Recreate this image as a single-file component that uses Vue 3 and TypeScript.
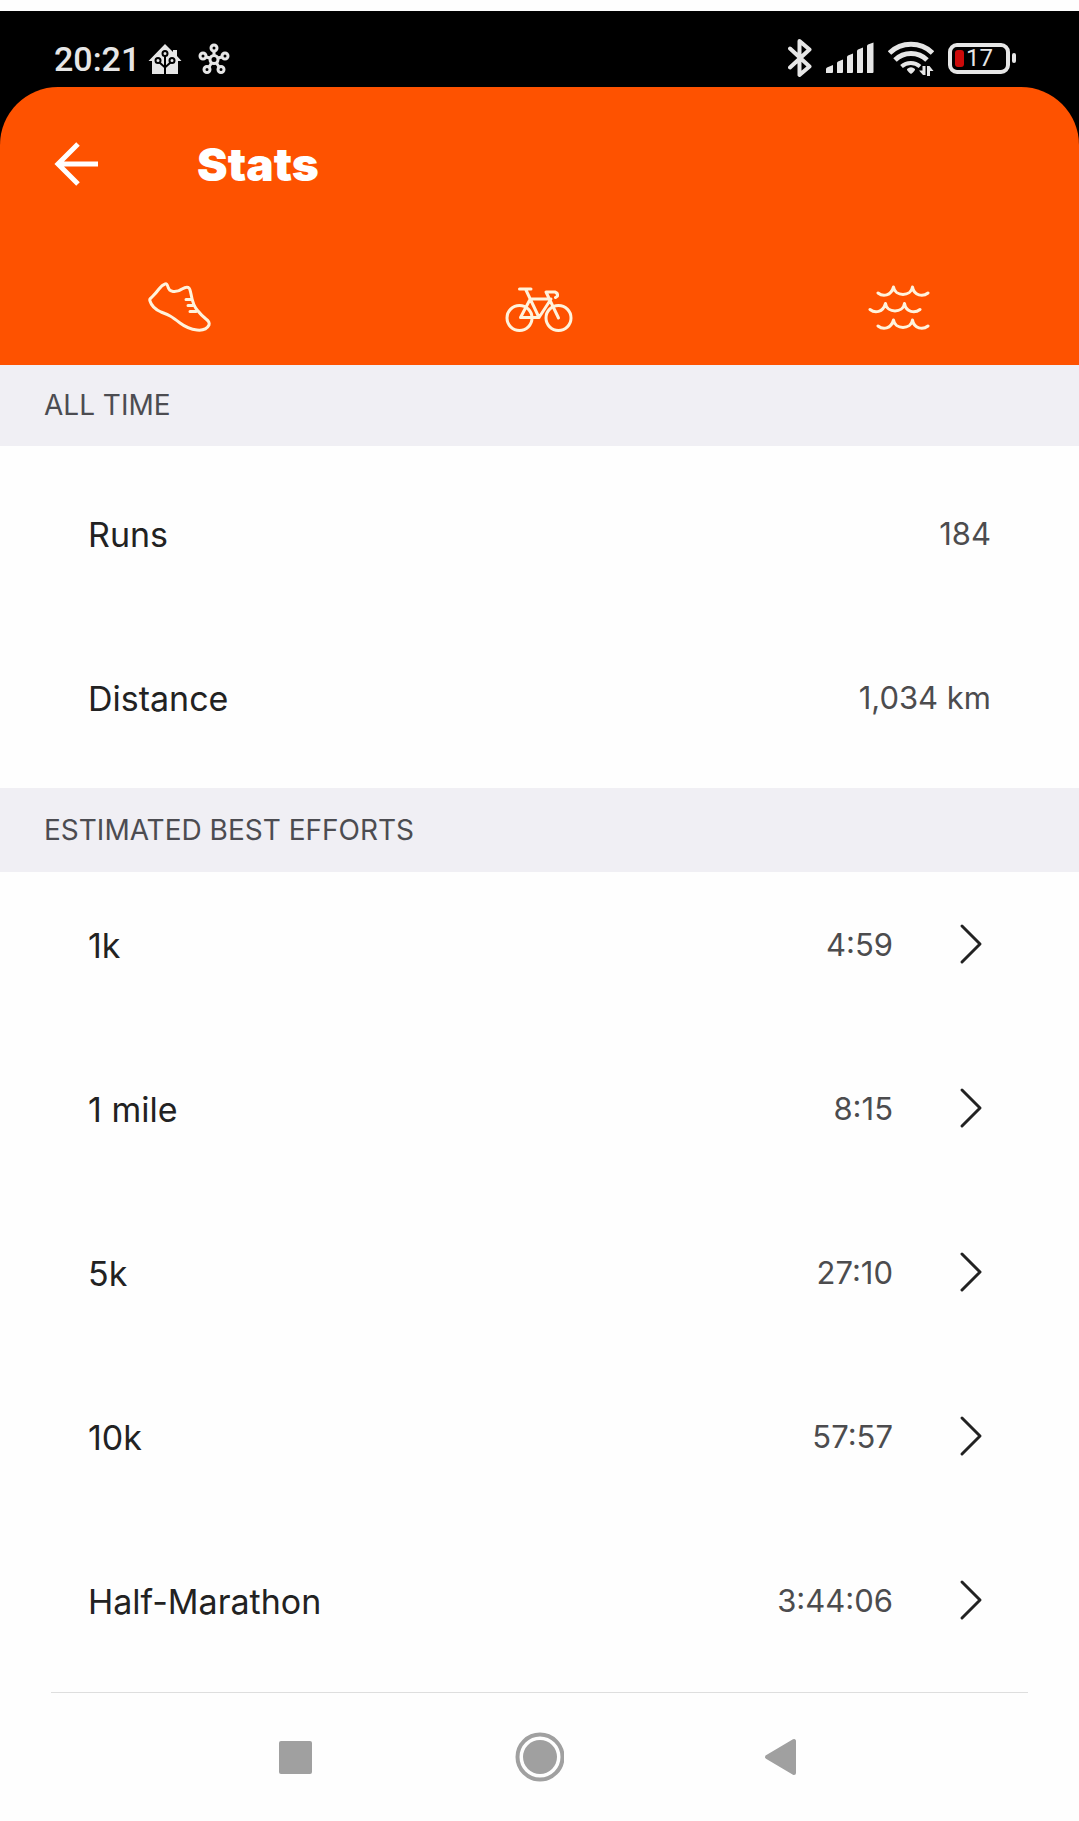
<script setup lang="ts">
interface Stat {
  label: string
  value: string
}

const totals: Stat[] = [
  { label: 'Runs', value: '184' },
  { label: 'Distance', value: '1,034 km' },
]

const efforts: Stat[] = [
  { label: '1k', value: '4:59' },
  { label: '1 mile', value: '8:15' },
  { label: '5k', value: '27:10' },
  { label: '10k', value: '57:57' },
  { label: 'Half-Marathon', value: '3:44:06' },
]
</script>

<template>
  <div class="screen">
    <div class="top">
      <div class="status">
        <div class="status-group">
          <span class="clock">20:21</span>
          <svg class="house" width="34" height="32" viewBox="0 0 34 32" aria-hidden="true">
            <path fill="#e6e6e6" d="M17 1 L25 9 V7 H29 V13 L33.500 18 H30 V31 H4 V18 H0.500 Z" />
            <g fill="none" stroke="#000" stroke-width="2">
              <circle cx="17" cy="10.500" r="2.500" />
              <circle cx="10" cy="17.500" r="2.500" />
              <circle cx="24" cy="17.500" r="2.500" />
              <path d="M17 13 V31 M11.500 19.500 L17 24.500 L22.500 19.500" />
            </g>
          </svg>
          <svg class="hub" width="32" height="32" viewBox="0 0 32 32" aria-hidden="true">
            <g fill="none" stroke="#e6e6e6" stroke-width="3">
              <circle cx="16" cy="16.500" r="4" />
              <circle cx="16" cy="5" r="3" />
              <circle cx="5" cy="13" r="3" />
              <circle cx="27" cy="13" r="3" />
              <circle cx="9" cy="26.500" r="3" />
              <circle cx="23" cy="26.500" r="3" />
              <path d="M16 8 V12.500 M8 14 L12 15 M24 14 L20 15 M11 24 L13.500 20 M21 24 L18.500 20" />
            </g>
          </svg>
        </div>
        <div class="status-group right">
          <svg width="24" height="40" viewBox="0 0 24 40" aria-hidden="true">
            <path fill="none" stroke="#e6e6e6" stroke-width="4" stroke-linejoin="round" stroke-linecap="round" d="M2 10.500 L21.500 28.500 L11.500 37 V3 L21.500 11.500 L2 29.500" />
          </svg>
          <svg width="48" height="32" viewBox="0 0 48 32" aria-hidden="true">
            <g fill="#e6e6e6">
              <path d="M0 31 V27 Q0 26 1 25.500 L7 23 V30 Q7 31 6 31 Z" />
              <path d="M11 31 V21 Q11 20 12 19.500 L17 17.500 V30 Q17 31 16 31 Z" />
              <path d="M21 31 V15 Q21 14 22 13.500 L27 11.500 V30 Q27 31 26 31 Z" />
              <path d="M31 31 V9 Q31 8 32 7.500 L37 5.500 V30 Q37 31 36 31 Z" />
              <path d="M41 31 V4 Q41 3 42 2.500 L47.500 0.500 V30 Q47.500 31 46.500 31 Z" />
            </g>
          </svg>
          <svg width="46" height="36" viewBox="0 0 46 36" aria-hidden="true">
            <g fill="none" stroke="#e6e6e6" stroke-width="5">
              <path d="M1.500 13 A31 31 0 0 1 44.500 13" />
              <path d="M7 20 A23 23 0 0 1 39 20" />
              <path d="M13.500 26.500 A14 14 0 0 1 32 26.500" stroke-width="4" />
            </g>
            <path fill="#e6e6e6" d="M19 29 Q23 25.500 27 29 Q27.500 30.500 23 34 Q18.500 30.500 19 29 Z" />
            <path fill="#e6e6e6" d="M37.500 26 V35 H35 L31 30.500 H34.500 V26 Z M39 36 V26 H41.500 L45.500 31 H42 V36 Z" />
          </svg>
          <div class="battery">
            <div class="cell">
              <span class="charge"></span>
              <span class="percent">17</span>
            </div>
            <span class="nub"></span>
          </div>
        </div>
      </div>

      <header class="header">
        <div class="title-bar">
          <button class="back" type="button" aria-label="Back">
            <svg width="46" height="46" viewBox="0 0 46 46">
              <path fill="none" stroke="#fff" stroke-width="5" d="M25 3 L5 23 L25 43 M5 23 H45" />
            </svg>
          </button>
          <h1>Stats</h1>
        </div>
        <nav class="tabs">
          <button type="button" aria-label="Run">
            <svg width="66" height="56" viewBox="2 1 66 56">
              <g fill="none" stroke="#fff3dc" stroke-width="3" stroke-linejoin="round" stroke-linecap="round">
                <path d="M20 5 Q22 4 23 8 Q24 12 28 12.500 Q33 13 37 10 Q42 7 44 9 Q45 10 46 15 Q48 27 53 32 Q56 36 61 40 Q65 43 64 46 Q61 52 52 51 Q43 50 35 44 C26 37 24 36 16 33 Q7 29 5 22 Q4 20 7 18 Q11 14 14 10 Q17 6 20 5 Z" />
                <path d="M41 20.500 H46 M43 26.500 H48 M45 32.500 H51" />
              </g>
            </svg>
          </button>
          <button type="button" aria-label="Ride">
            <svg width="68" height="56" viewBox="0 -4 68 56">
              <g fill="none" stroke="#fff3dc" stroke-width="3" stroke-linejoin="round" stroke-linecap="round">
                <circle cx="14.500" cy="34" r="12.500" />
                <circle cx="53.500" cy="34" r="12.500" />
                <path d="M14.500 5 H26 M20.500 5 L34 33.500 M34 33.500 H15.500 L25 15.500 M34 33.500 L46 15 M25 15 H44 M53.500 34 L41 8 H50 Q53 9 52.500 12 L50.500 13.500" />
              </g>
            </svg>
          </button>
          <button type="button" aria-label="Swim">
            <svg width="62" height="56" viewBox="0 -1 62 56">
              <g fill="none" stroke="#fff3dc" stroke-width="3" stroke-linejoin="round" stroke-linecap="round">
                <path d="M10 12 C15 16 23 15 25.500 6 C27 16 43 16 44.500 6 C46 15 55 16 60 12" />
                <path d="M2 28.500 C7 32.500 15 31.500 17.500 22.500 C19 32.500 35 32.500 36.500 22.500 C38 31.500 47 32.500 52 28.500" />
                <path d="M10 45 C15 49 23 48 25.500 39 C27 49 43 49 44.500 39 C46 48 55 49 60 45" />
              </g>
            </svg>
          </button>
        </nav>
      </header>
    </div>

    <main>
      <section>
        <h2 class="heading">ALL TIME</h2>
        <ul class="list totals">
          <li v-for="row in totals" :key="row.label" class="row">
            <span class="label">{{ row.label }}</span>
            <span class="value">{{ row.value }}</span>
          </li>
        </ul>
      </section>
      <section>
        <h2 class="heading tall">ESTIMATED BEST EFFORTS</h2>
        <ul class="list efforts">
          <li v-for="row in efforts" :key="row.label">
            <a href="#" class="row">
              <span class="label">{{ row.label }}</span>
              <span class="value">{{ row.value }}</span>
              <svg class="chevron" width="36" height="48" viewBox="0 0 36 48" aria-hidden="true">
                <path fill="none" stroke="#222" stroke-width="3" stroke-linecap="round" stroke-linejoin="round" d="M7 5 L25 23 L7 41" />
              </svg>
            </a>
          </li>
        </ul>
      </section>
    </main>

    <hr class="divider" />

    <nav class="system">
      <button type="button" aria-label="Recent apps">
        <svg width="50" height="50" viewBox="0 0 50 50"><rect x="9" y="9" width="33" height="33" rx="2" fill="#a0a0a0" /></svg>
      </button>
      <button type="button" aria-label="Home">
        <svg width="50" height="50" viewBox="-1 0 50 50">
          <circle cx="25" cy="25" r="22.500" fill="none" stroke="#a0a0a0" stroke-width="4" />
          <circle cx="25" cy="25" r="17" fill="#a0a0a0" />
        </svg>
      </button>
      <button type="button" aria-label="Back">
        <svg width="50" height="50" viewBox="0 0 50 50"><path fill="#a0a0a0" stroke="#a0a0a0" stroke-width="4" stroke-linejoin="round" d="M8 25 L35 9 V41 Z" /></svg>
      </button>
    </nav>
  </div>
</template>

<style>
body {
  margin: 0;
  background: #fefefe;
}
</style>

<style scoped>
.screen {
  padding-top: 11px;
  font-family: Inter, "Liberation Sans", sans-serif;
  color: #222;
}

button {
  display: flex;
  align-items: center;
  justify-content: center;
  padding: 0;
  border: 0;
  background: none;
}

svg {
  display: block;
  flex: none;
}

.top {
  background: #000;
}

.status {
  display: flex;
  justify-content: space-between;
  height: 76px;
  padding: 20px 63px 0 54px;
  box-sizing: border-box;
  font-family: Roboto, sans-serif;
  color: #e6e6e6;
}

.status-group {
  display: flex;
  align-items: center;
}

.right {
  gap: 14px;
  padding-bottom: 2px;
}

.clock {
  font-size: 34px;
  line-height: 40px;
  font-weight: 500;
}

.house {
  margin-left: 8px;
}

.hub {
  margin-left: 16px;
}

.battery {
  display: flex;
  align-items: center;
  gap: 2px;
}

.cell {
  display: flex;
  align-items: center;
  gap: 2px;
  width: 62px;
  height: 31px;
  padding-left: 3px;
  box-sizing: border-box;
  border: 4px solid #e6e6e6;
  border-radius: 9px;
}

.charge {
  width: 9px;
  height: 17px;
  border-radius: 3px;
  background: #cc0a0a;
}

.percent {
  font-size: 24px;
  line-height: 24px;
}

.nub {
  width: 4px;
  height: 10px;
  border-radius: 2px;
  background: #e6e6e6;
}

.header {
  height: 278px;
  border-radius: 58px 58px 0 0;
  background: #fe5200;
}

.title-bar {
  display: flex;
  align-items: center;
  gap: 98px;
  padding: 47px 53px 0;
}

h1 {
  margin: 0;
  font-size: 46px;
  line-height: 60px;
  font-weight: 900;
  color: #fff;
}

.tabs {
  display: grid;
  grid-template-columns: repeat(3, 1fr);
  padding-top: 86px;
}

.heading {
  margin: 0;
  padding: 0 44px;
  background: #f0eff4;
  font-size: 28px;
  line-height: 81px;
  font-weight: 400;
  color: #4c4c51;
}

.tall {
  line-height: 84px;
}

.list {
  display: flex;
  flex-direction: column;
  gap: 64px;
  margin: 0;
  list-style: none;
}

.totals {
  padding: 38px 0 40px;
}

.efforts {
  padding: 23px 0 41px;
}

.row {
  display: flex;
  align-items: center;
  height: 100px;
  padding: 0 88px;
  color: inherit;
  text-decoration: none;
}

.label {
  flex: 1;
  padding-top: 2px;
  font-size: 34px;
  line-height: 40px;
  font-weight: 400;
}

.value {
  font-size: 31px;
  line-height: 40px;
  font-weight: 400;
  color: #4c4c4e;
}

.chevron {
  margin-left: 62px;
}

.divider {
  height: 1px;
  margin: 0 51px;
  border: 0;
  background: #dedede;
}

.system {
  display: grid;
  grid-template-columns: repeat(3, 1fr);
  width: 68%;
  margin: 0 auto;
  padding: 39px 0 37px;
}
</style>
